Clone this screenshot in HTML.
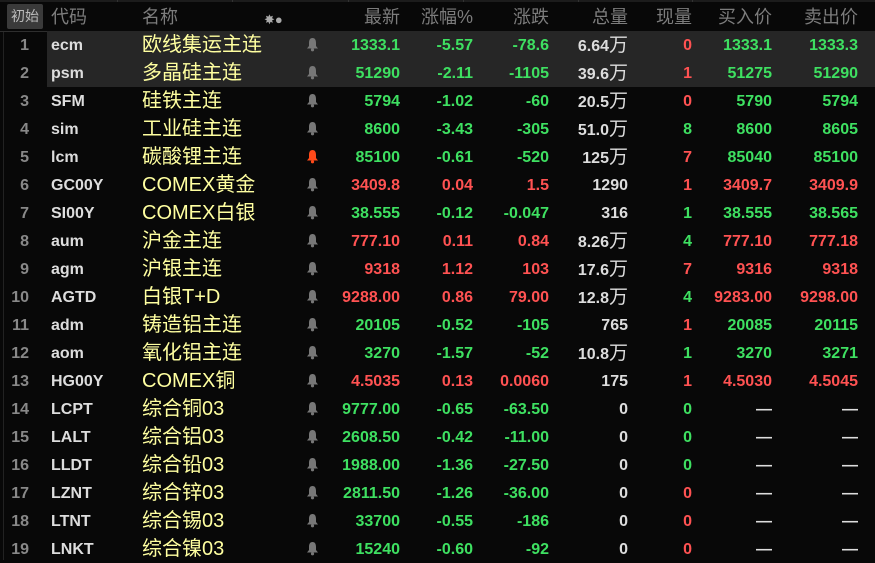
<!DOCTYPE html><html><head><meta charset="utf-8"><style>
body{margin:0;width:875px;height:560px;background:#080808;overflow:hidden;position:relative;font-family:"Liberation Sans","Noto Sans CJK SC",sans-serif}
.top{position:absolute;left:0;top:0;width:875px;height:2px;background:#1c1c1c}
.top i{position:absolute;top:0;height:2px;background:#333;width:1px}
.hdr{position:absolute;top:0;left:0;width:875px;height:31px;border-bottom:1px solid #2e2e2e}
.h{position:absolute;top:5px;font-size:18px;color:#7c7c7c;line-height:24px;white-space:nowrap}
.btn{position:absolute;left:7px;top:4px;width:36px;height:25px;background:#3a3a3a;border-radius:2px;color:#bbb;font-size:14px;line-height:25px;text-align:center}
.row{position:absolute;left:0;width:875px;height:28px}
.hl{background:#262626;left:47px;width:828px}
.c{position:absolute;top:4px;line-height:22px;font-size:16px;font-weight:bold;white-space:nowrap;text-align:right}
.n{font-weight:normal;font-size:20px;color:#ffffa0;text-align:left;top:3px}
.g{color:#3ee061}.r{color:#ff5252}.w{color:#ddd}.gr{color:#888}
.vl{position:absolute;left:3px;top:32px;width:1px;height:528px;background:#222}
</style></head><body>
<div class="top"><i style="left:117px"></i><i style="left:232px"></i><i style="left:348px"></i><i style="left:463px"></i><i style="left:578px"></i><i style="left:692px"></i></div>
<div class="hdr">
<div class="btn">初始</div>
<div class="h" style="left:51px">代码</div>
<div class="h" style="left:142px">名称</div>
<div class="h" style="left:264px;top:8px;font-size:13px;color:#aaa">✸●</div>
<div class="h" style="right:475px">最新</div>
<div class="h" style="right:402px">涨幅%</div>
<div class="h" style="right:326px">涨跌</div>
<div class="h" style="right:247px">总量</div>
<div class="h" style="right:183px">现量</div>
<div class="h" style="right:103px">买入价</div>
<div class="h" style="right:17px">卖出价</div>
</div>
<div class="vl"></div>
<div id="rows"></div>
<script>
var d=[
["ecm","欧线集运主连","1333.1","-5.57","-78.6","6.64万","0r","1333.1","1333.3","g"],
["psm","多晶硅主连","51290","-2.11","-1105","39.6万","1r","51275","51290","g"],
["SFM","硅铁主连","5794","-1.02","-60","20.5万","0r","5790","5794","g"],
["sim","工业硅主连","8600","-3.43","-305","51.0万","8g","8600","8605","g"],
["lcm","碳酸锂主连","85100","-0.61","-520","125万","7r","85040","85100","g"],
["GC00Y","COMEX黄金","3409.8","0.04","1.5","1290","1r","3409.7","3409.9","r"],
["SI00Y","COMEX白银","38.555","-0.12","-0.047","316","1g","38.555","38.565","g"],
["aum","沪金主连","777.10","0.11","0.84","8.26万","4g","777.10","777.18","r"],
["agm","沪银主连","9318","1.12","103","17.6万","7r","9316","9318","r"],
["AGTD","白银T+D","9288.00","0.86","79.00","12.8万","4g","9283.00","9298.00","r"],
["adm","铸造铝主连","20105","-0.52","-105","765","1r","20085","20115","g"],
["aom","氧化铝主连","3270","-1.57","-52","10.8万","1g","3270","3271","g"],
["HG00Y","COMEX铜","4.5035","0.13","0.0060","175","1r","4.5030","4.5045","r"],
["LCPT","综合铜03","9777.00","-0.65","-63.50","0","0g","—","—","g"],
["LALT","综合铝03","2608.50","-0.42","-11.00","0","0g","—","—","g"],
["LLDT","综合铅03","1988.00","-1.36","-27.50","0","0g","—","—","g"],
["LZNT","综合锌03","2811.50","-1.26","-36.00","0","0r","—","—","g"],
["LTNT","综合锡03","33700","-0.55","-186","0","0r","—","—","g"],
["LNKT","综合镍03","15240","-0.60","-92","0","0r","—","—","g"]];
var h="";
d.forEach(function(x,i){var t=31+i*28;var c=x[9];
var bell=i==4?"#ff4a1a":"#777";
h+='<div class="row'+(i<2?' hl':'')+'" style="top:'+t+'px"></div>';
h+='<div class="row" style="top:'+t+'px">';
h+='<div class="c gr" style="right:846px">'+(i+1)+'</div>';
h+='<div class="c w" style="left:51px;text-align:left">'+x[0]+'</div>';
h+='<div class="c n" style="left:142px">'+x[1]+'</div>';
h+='<svg style="position:absolute;left:306px;top:6px" width="13" height="15" viewBox="0 0 13 15"><path d="M6.5 1C4 1 3 3 3 6V9L1 11.5H12L10 9V6C10 3 9 1 6.5 1Z" fill="'+bell+'"/><circle cx="6.5" cy="12.8" r="1.6" fill="'+bell+'"/></svg>';
h+='<div class="c '+c+'" style="right:475px">'+x[2]+'</div>';
h+='<div class="c '+c+'" style="right:402px">'+x[3]+'</div>';
h+='<div class="c '+c+'" style="right:326px">'+x[4]+'</div>';
var v=x[5];if(v.indexOf("万")>0)v=v.replace("万",'<span style="font-weight:normal;font-size:19px">万</span>');
h+='<div class="c w" style="right:247px">'+v+'</div>';
h+='<div class="c '+x[6][1]+'" style="right:183px">'+x[6][0]+'</div>';
var bc=x[7]=="—"?"w":c;
h+='<div class="c '+bc+'" style="right:103px">'+x[7]+'</div>';
h+='<div class="c '+bc+'" style="right:17px">'+x[8]+'</div>';
h+='</div>';});
document.getElementById("rows").innerHTML=h;
</script>
</body></html>
